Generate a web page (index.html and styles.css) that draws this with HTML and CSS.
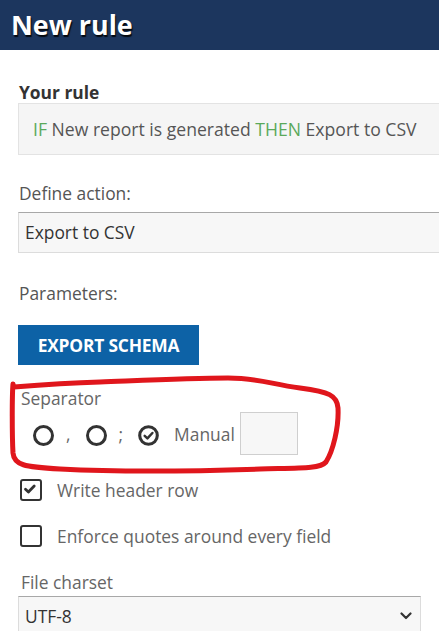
FILE: index.html
```html
<!DOCTYPE html>
<html>
<head>
<meta charset="utf-8">
<link rel="stylesheet" href="styles.css">
</head>
<body>
<header class="topbar"><h1 class="title">New rule</h1></header>
<main class="content">
  <div class="label-strong">Your rule</div>
  <div class="rule-box"><span class="kw">IF</span> New report is generated <span class="kw">THEN</span> Export to CSV</div>

  <div class="label">Define action:</div>
  <div class="select wide">Export to CSV</div>

  <div class="label params">Parameters:</div>
  <button class="btn">EXPORT SCHEMA</button>

  <section class="sep-group">
    <div class="label sep-label">Separator</div>
    <div class="radio-row">
      <span class="opt"><span class="radio"></span><span class="opt-text">,</span></span>
      <span class="opt"><span class="radio"></span><span class="opt-text">;</span></span>
      <span class="opt"><span class="radio checked"><svg viewBox="0 0 21 21" width="21" height="21"><circle cx="10.5" cy="10.5" r="8.8" fill="none" stroke="#333" stroke-width="3.1"/><path d="M6.7 10.9 L9.4 13.4 L14.4 8" fill="none" stroke="#333" stroke-width="2.5" stroke-linecap="round" stroke-linejoin="round"/></svg></span><span class="opt-text manual">Manual</span></span>
      <span class="manual-input"></span>
    </div>
    <svg class="annot" viewBox="0 0 350 110" width="350" height="110">
      <path d="M13,9 C12,20 12,60 13,78 C14,90 24,92 60,94 C120,97 200,96 260,94 C300,93 320,94 326,87 C333,76 339,52 338,33 C337,20 329,17 300,13 C270,9 258,3 228,3 C190,3 150,5 100,7 C70,8 40,10 14,12" fill="none" stroke="#e0161c" stroke-width="5" stroke-linecap="round" stroke-linejoin="round"/>
    </svg>
  </section>

  <div class="check-row"><span class="checkbox"><svg viewBox="0 0 22 22" width="22" height="22"><path d="M6.5 11.3 L9.4 14 L15.2 8" fill="none" stroke="#333" stroke-width="2.8" stroke-linecap="round" stroke-linejoin="round"/></svg></span><span class="check-text">Write header row</span></div>
  <div class="check-row"><span class="checkbox"></span><span class="check-text">Enforce quotes around every field</span></div>

  <div class="label sep-label charset-label">File charset</div>
  <div class="select charset">UTF-8<svg class="chev" viewBox="0 0 12 8" width="12" height="8"><path d="M1.5 1.5 L6 6 L10.5 1.5" fill="none" stroke="#333" stroke-width="2.2" stroke-linecap="round" stroke-linejoin="round"/></svg></div>
</main>
</body>
</html>
```

FILE: styles.css
```css
html, body {
  margin: 0;
  padding: 0;
  background: #fff;
  overflow: hidden;
}
body {
  font-family: "Open Sans", "Noto Sans", sans-serif;
  font-size: 17.4px;
  color: #555;
  width: 439px;
  height: 631px;
}
.topbar {
  background: #1c365e;
  height: 50px;
  padding-left: 11px;
  box-sizing: border-box;
}
.title {
  margin: 0;
  font-size: 26.9px;
  font-weight: 700;
  line-height: 49px;
  color: #fff;
  text-shadow: 1px 2px 1px rgba(0,0,0,0.85);
}
.content {
  padding-left: 18px;
  position: relative;
}
.label-strong {
  margin-top: 31px;
  font-weight: 700;
  color: #333;
  line-height: 22px;
  padding-left: 1px;
}
.rule-box {
  width: 460px;
  height: 52px;
  box-sizing: border-box;
  background: #f5f5f5;
  border: 1px solid #e3e3e3;
  line-height: 50px;
  padding-left: 14px;
  white-space: nowrap;
  font-size: 17.6px;
}
.kw { color: #5aa95a; }
.label {
  line-height: 22px;
  margin-top: 27px;
  padding-left: 1px;
}
.select {
  margin-top: 8px;
  height: 41px;
  box-sizing: border-box;
  background: #f7f7f7;
  border: 1px solid #dcdcdc;
  border-top-color: #a8a8a8;
  line-height: 39px;
  padding-left: 6px;
  color: #333;
}
.wide { width: 460px; }
.params { margin-top: 29px; }
.btn {
  display: block;
  margin-top: 21px;
  width: 181px;
  height: 40px;
  border: none;
  background: #0d62a6;
  color: #fff;
  font-family: "Open Sans", "Noto Sans", sans-serif;
  font-weight: 700;
  font-size: 17.4px;
  padding: 0;
  letter-spacing: -0.2px;
}
.sep-group {
  position: relative;
}
.sep-label {
  margin-top: 22px;
  padding-left: 3px;
  color: #666;
}
.radio-row {
  margin-top: 3px;
  display: flex;
  align-items: center;
  height: 43px;
  padding-left: 15px;
}
.opt {
  display: inline-flex;
  align-items: center;
  margin-right: 15px;
}
.radio {
  width: 21px;
  height: 21px;
  box-sizing: border-box;
  border: 3.1px solid #333;
  border-radius: 50%;
  display: inline-block;
  margin-top: 3px;
}
.radio.checked {
  border: none;
}
.radio svg { display: block; }
.opt-text {
  margin-left: 12px;
  color: #666;
}
.opt-text.manual { margin-left: 15px; }
.opt:nth-child(3) { margin-right: 5px; }
.manual-input {
  width: 58px;
  height: 43px;
  box-sizing: border-box;
  border: 1px solid #cfcfcf;
  background: #f7f7f7;
}
.annot {
  position: absolute;
  left: -18px;
  top: -12px;
  pointer-events: none;
}
.check-row {
  display: flex;
  align-items: center;
  margin-top: 24px;
  height: 22px;
  padding-left: 2px;
}
.checkbox {
  width: 22px;
  height: 22px;
  box-sizing: border-box;
  border: 2.8px solid #333;
  border-radius: 3px;
  position: relative;
}
.checkbox svg {
  position: absolute;
  left: -2.8px;
  top: -2.8px;
}
.check-text {
  margin-left: 15px;
  color: #666;
}
.charset-label { margin-top: 24px; }
.charset {
  margin-top: 3px;
  width: 403px;
  position: relative;
}
.chev {
  position: absolute;
  right: 8px;
  top: 15px;
}
```
